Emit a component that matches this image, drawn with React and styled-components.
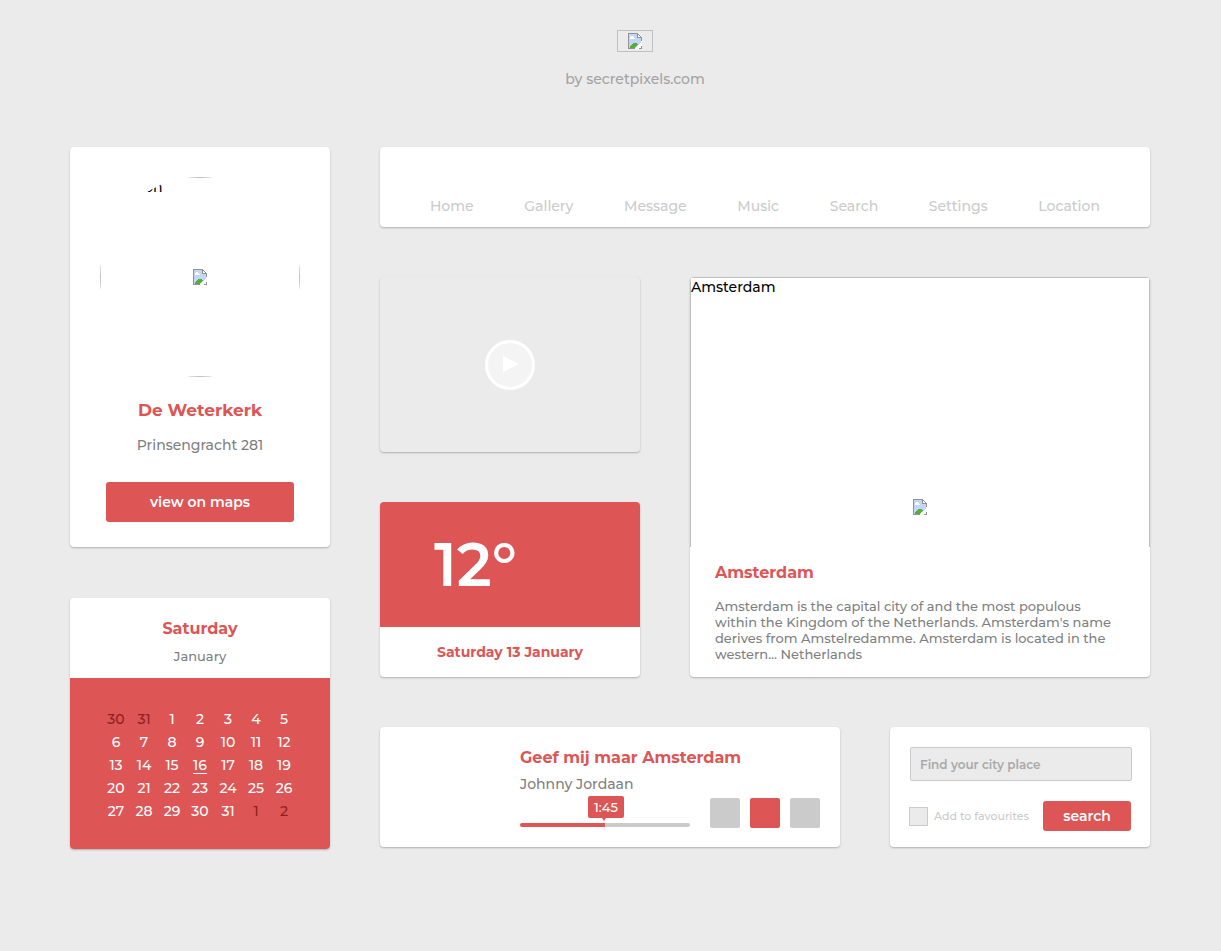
import React, { useState } from "react";
import styled, { createGlobalStyle, css } from "styled-components";

const red = "#dd5555";
const grey = "#7f7f7f";
const light = "#cbcbcb";
const page = "#ebebeb";

const GlobalStyle = createGlobalStyle`
  *, *::before, *::after { box-sizing: border-box; }
  body {
    margin: 0;
    background: ${page};
    color: #000;
    font-family: Montserrat, Inter, "Open Sans", sans-serif;
    font-size: 14px;
    font-weight: 500;
    line-height: 18px;
  }
  h1, h2, p { margin: 0; }
  button, input { font: inherit; margin: 0; }
`;

const Page = styled.div`
  max-width: 1081px;
  margin: 0 auto;
  padding: 30px 1px 100px 0;
`;

const Header = styled.header`
  display: flex;
  flex-direction: column;
  align-items: center;
  gap: 18px;
  padding-left: 50px;
  margin-bottom: 59px;
  color: #a3a3a3;
`;

const Logo = styled.div`
  display: flex;
  align-items: center;
  justify-content: center;
  width: 36px;
  height: 22px;
  border: 1px solid #c0c0c0;
`;

const Columns = styled.div`
  display: grid;
  grid-template-columns: minmax(0, 26fr) minmax(0, 77fr);
  gap: 50px;
  align-items: start;
`;

const Column = styled.div`
  display: flex;
  flex-direction: column;
  gap: ${(p) => p.$gap || 50}px;
`;

const Row = styled.div`
  display: grid;
  grid-template-columns: ${(p) =>
    p.$wideFirst ? "minmax(0, 46fr) minmax(0, 26fr)" : "minmax(0, 26fr) minmax(0, 46fr)"};
  gap: 50px;
`;

const Card = styled.section`
  background: #fff;
  border-radius: 4px;
  box-shadow: 0 1px 2px rgba(0, 0, 0, 0.25);
`;

const Title = styled.h2`
  color: ${red};
  font-size: ${(p) => (p.$large ? 17 : 16)}px;
  line-height: 20px;
  font-weight: 700;
`;

const Subtitle = styled.p`
  color: ${grey};
  font-size: ${(p) => (p.$small ? 13 : 14)}px;
`;

const redButton = css`
  border: 0;
  border-radius: 3px;
  background: ${red};
  color: #fff;
  font-weight: 600;
  cursor: pointer;
`;

const PlaceCard = styled(Card)`
  display: flex;
  flex-direction: column;
  align-items: center;
  padding: 30px 30px 25px;

  ${Title} { margin: 23px 0 16px; }
`;

const Portrait = styled.div`
  width: 200px;
  height: 200px;
  border-radius: 50%;
  overflow: hidden;
`;

const Missing = styled.div`
  position: relative;
  display: flex;
  align-items: center;
  justify-content: center;
  height: ${(p) => p.$height}px;
  border: 1px solid #c0c0c0;
`;

const Alt = styled.span`
  position: absolute;
  top: 0;
  left: 0;
`;

const MapButton = styled.button`
  ${redButton}
  width: 188px;
  height: 40px;
  margin-top: 28px;
`;

const CalendarHead = styled.header`
  display: flex;
  flex-direction: column;
  align-items: center;
  gap: 8px;
  height: 80px;
  padding-top: 21px;
`;

const CalendarBody = styled.div`
  padding: 30px 32px 26px;
  border-radius: 0 0 4px 4px;
  background: ${red};
`;

const Days = styled.table`
  width: 100%;
  table-layout: fixed;
  border-collapse: collapse;
  font-size: 14px;
  font-weight: 500;
  line-height: 23px;
  text-align: center;
`;

const Day = styled.td`
  padding: 0;
  color: ${(p) => (p.$outside ? "#8e2222" : "#fff")};
  text-decoration: ${(p) => (p.$current ? "underline" : "none")};
  text-underline-offset: 3px;
`;

const NavCard = styled(Card)`
  height: 80px;
  padding: 50px 50px 0;
`;

const Nav = styled.nav`
  display: flex;
  justify-content: space-between;
`;

const NavLink = styled.a`
  color: ${light};
  text-decoration: none;
`;

const VideoCard = styled(Card)`
  display: flex;
  align-items: center;
  justify-content: center;
  height: 175px;
  background: ${page};
`;

const PlayButton = styled.button`
  display: flex;
  align-items: center;
  justify-content: center;
  width: 50px;
  height: 50px;
  padding: 0 0 2px 1px;
  border: 3px solid #fff;
  border-radius: 50%;
  background: #f4f4f4;
  cursor: pointer;
`;

const WeatherCard = styled(Card)`
  height: 175px;
  overflow: hidden;
`;

const Temperature = styled.div`
  height: 125px;
  padding-left: 54px;
  background: ${red};
  color: #fff;
  font-size: 60px;
  font-weight: 600;
  line-height: 125px;
`;

const WeatherDate = styled.p`
  color: ${red};
  font-size: 14px;
  font-weight: 700;
  line-height: 50px;
  text-align: center;
`;

const CityCard = styled(Card)`
  overflow: hidden;
`;

const CityPhoto = styled.div`
  height: 270px;
  overflow: hidden;
`;

const CityText = styled.div`
  padding: 16px 25px 15px;
`;

const Description = styled.p`
  margin-top: 15px;
  color: ${grey};
  font-size: 13px;
  line-height: 16px;
`;

const MusicCard = styled(Card)`
  display: flex;
  align-items: flex-end;
  gap: 20px;
  height: 120px;
  padding: 0 20px 19px 140px;
`;

const Track = styled.div`
  flex: 1;
  min-width: 0;
  white-space: nowrap;

  ${Title} { margin-bottom: 7px; }
`;

const Progress = styled.div`
  position: relative;
  height: 35px;
  padding-top: 30px;
`;

const Slider = styled.input`
  display: block;
  width: 100%;
  height: 4px;
  border-radius: 2px;
  appearance: none;
  background: linear-gradient(${red}, ${red}) 0 0 / ${(p) => p.value}% 100% no-repeat ${light};
  cursor: pointer;

  &::-webkit-slider-thumb {
    appearance: none;
    width: 4px;
    height: 4px;
    background: transparent;
  }
`;

const Time = styled.output`
  position: absolute;
  top: 3px;
  left: 40%;
  width: 36px;
  border-radius: 2px;
  background: ${red};
  color: #fff;
  font-size: 13px;
  font-weight: 500;
  line-height: 22px;
  text-align: center;

  &::after {
    content: "";
    position: absolute;
    top: 100%;
    left: 14px;
    border: solid transparent;
    border-width: 3px 2px 0;
    border-top-color: ${red};
  }
`;

const Controls = styled.div`
  display: flex;
  gap: 10px;
`;

const Control = styled.button`
  width: 30px;
  height: 30px;
  padding: 0;
  border: 0;
  border-radius: 2px;
  background: ${(p) => (p.$active ? red : light)};
  cursor: pointer;
`;

const SearchForm = styled(Card).attrs({ as: "form" })`
  height: 120px;
  padding: 20px 18px 0 19px;
`;

const SearchField = styled.input`
  display: block;
  width: calc(100% - 1px);
  height: 34px;
  margin: 0 0 20px 1px;
  padding: 0 9px;
  border: 1px solid ${light};
  border-radius: 2px;
  background: ${page};
  color: ${grey};
  font-size: 12px;
  font-weight: 600;

  &::placeholder { color: #a9a9a9; opacity: 1; }
`;

const SearchActions = styled.div`
  display: flex;
  align-items: center;
  justify-content: space-between;
  padding-right: 1px;
`;

const Favourite = styled.label`
  display: flex;
  align-items: center;
  gap: 6px;
  color: ${light};
  font-size: 11px;
  white-space: nowrap;
`;

const Checkbox = styled.input`
  appearance: none;
  width: 19px;
  height: 19px;
  border: 1px solid ${light};
  background: ${page};

  &:checked { background: ${red}; }
`;

const SearchButton = styled.button`
  ${redButton}
  width: 88px;
  height: 30px;
  padding: 0;
`;

function BrokenImage() {
  return (
    <svg width="14" height="16" viewBox="0 0 14 16" aria-hidden="true" shapeRendering="crispEdges">
      <path d="M0 0H10L14 4V16H0Z" fill="#fff" />
      <path d="M1 1H9V5H13V11L8 15H1Z" fill="#c4d6f5" />
      <path d="M2 4H3V3H5V4H6V5H7V6H2Z" fill="#fff" />
      <path d="M2 15V13H3V12H4V11H5V10H9V11H10V12H9V13H8V14H7V15Z" fill="#58ad36" />
      <path d="M0.500 16V0.500H9.500L13.500 4.500V8M9.500 0.500V4.500H13.500M0 15.500H8M11 15.500H14M13.500 12V16" fill="none" stroke="#929292" />
      <path d="M14 8L6 16H10L14 12Z" fill="#fff" />
    </svg>
  );
}

const weeks = [
  [30, 31, 1, 2, 3, 4, 5],
  [6, 7, 8, 9, 10, 11, 12],
  [13, 14, 15, 16, 17, 18, 19],
  [20, 21, 22, 23, 24, 25, 26],
  [27, 28, 29, 30, 31, 1, 2],
];
const links = ["Home", "Gallery", "Message", "Music", "Search", "Settings", "Location"];

function isOutside(week, day) {
  return (week === 0 && day > 7) || (week === weeks.length - 1 && day < 7);
}

export default function App() {
  const [position, setPosition] = useState(50);

  return (
    <>
      <GlobalStyle />
      <Page>
        <Header>
          <Logo><BrokenImage /></Logo>
          <p>by secretpixels.com</p>
        </Header>
        <Columns>
          <Column $gap={51}>
            <PlaceCard>
              <Portrait>
                <Missing $height={200}><Alt>Location</Alt><BrokenImage /></Missing>
              </Portrait>
              <Title $large>De Weterkerk</Title>
              <Subtitle>Prinsengracht 281</Subtitle>
              <MapButton type="button">view on maps</MapButton>
            </PlaceCard>
            <Card>
              <CalendarHead>
                <Title>Saturday</Title>
                <Subtitle $small>January</Subtitle>
              </CalendarHead>
              <CalendarBody>
                <Days aria-label="January">
                  <tbody>
                    {weeks.map((week, w) => (
                      <tr key={w}>
                        {week.map((day) => (
                          <Day key={day} $outside={isOutside(w, day)} $current={day === 16}>{day}</Day>
                        ))}
                      </tr>
                    ))}
                  </tbody>
                </Days>
              </CalendarBody>
            </Card>
          </Column>
          <Column>
            <NavCard>
              <Nav>
                {links.map((name) => <NavLink key={name} href={`#${name.toLowerCase()}`}>{name}</NavLink>)}
              </Nav>
            </NavCard>
            <Row>
              <Column>
                <VideoCard>
                  <PlayButton type="button" aria-label="Play video">
                    <svg width="16" height="16" viewBox="0 0 16 16"><path d="M0 0L16 8L0 16Z" fill="#fff" /></svg>
                  </PlayButton>
                </VideoCard>
                <WeatherCard>
                  <Temperature>12°</Temperature>
                  <WeatherDate>Saturday 13 January</WeatherDate>
                </WeatherCard>
              </Column>
              <CityCard>
                <CityPhoto>
                  <Missing $height={460}><Alt>Amsterdam</Alt><BrokenImage /></Missing>
                </CityPhoto>
                <CityText>
                  <Title>Amsterdam</Title>
                  <Description>
                    Amsterdam is the capital city of and the most populous within the Kingdom of the
                    Netherlands. Amsterdam's name derives from Amstelredamme. Amsterdam is located in
                    the western... Netherlands
                  </Description>
                </CityText>
              </CityCard>
            </Row>
            <Row $wideFirst>
              <MusicCard>
                <Track>
                  <Title>Geef mij maar Amsterdam</Title>
                  <Subtitle>Johnny Jordaan</Subtitle>
                  <Progress>
                    <Time>1:45</Time>
                    <Slider
                      type="range"
                      aria-label="Track position"
                      value={position}
                      onChange={(e) => setPosition(Number(e.target.value))}
                    />
                  </Progress>
                </Track>
                <Controls>
                  <Control type="button" aria-label="Previous" />
                  <Control type="button" aria-label="Pause" $active />
                  <Control type="button" aria-label="Next" />
                </Controls>
              </MusicCard>
              <SearchForm onSubmit={(e) => e.preventDefault()}>
                <SearchField type="text" placeholder="Find your city place" aria-label="Find your city place" />
                <SearchActions>
                  <Favourite><Checkbox type="checkbox" />Add to favourites</Favourite>
                  <SearchButton type="submit">search</SearchButton>
                </SearchActions>
              </SearchForm>
            </Row>
          </Column>
        </Columns>
      </Page>
    </>
  );
}
